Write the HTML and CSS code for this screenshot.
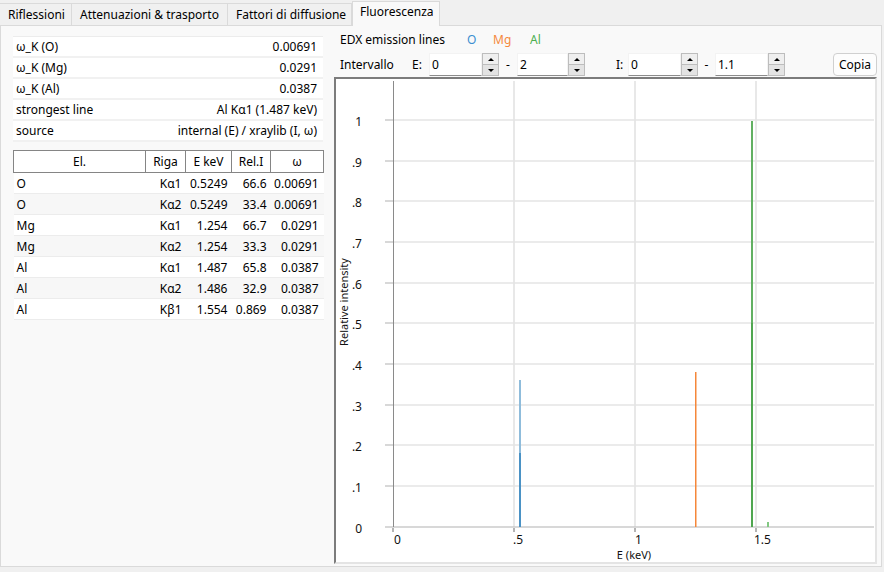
FILE: index.html
```html
<!DOCTYPE html>
<html lang="it">
<head>
	<meta charset="UTF-8">
	<title>Fluorescenza</title>
	<link rel="stylesheet" href="styles.css">
</head>
<body>
	<div class="tabs">
		<div class="tab t1">Riflessioni</div>
		<div class="tab t2">Attenuazioni &amp; trasporto</div>
		<div class="tab t3">Fattori di diffusione</div>
		<div class="tab active">Fluorescenza</div>
	</div>
	<div class="pane">
		<div class="left">
			<div class="props">
				<div class="prop"><span>ω_K (O)</span><span>0.00691</span></div>
				<div class="prop"><span>ω_K (Mg)</span><span>0.0291</span></div>
				<div class="prop"><span>ω_K (Al)</span><span>0.0387</span></div>
				<div class="prop"><span>strongest line</span><span>Al Kα1 (1.487 keV)</span></div>
				<div class="prop"><span>source</span><span>internal (E) / xraylib (I, ω)</span></div>
			</div>
			<table class="lines">
				<thead>
					<tr><th class="c-el">El.</th><th class="c-riga">Riga</th><th class="c-e">E keV</th><th class="c-rel">Rel.I</th><th class="c-w">ω</th></tr>
				</thead>
				<tbody>
					<tr><td>O</td><td>Kα1</td><td>0.5249</td><td>66.6</td><td>0.00691</td></tr>
					<tr><td>O</td><td>Kα2</td><td>0.5249</td><td>33.4</td><td>0.00691</td></tr>
					<tr><td>Mg</td><td>Kα1</td><td>1.254</td><td>66.7</td><td>0.0291</td></tr>
					<tr><td>Mg</td><td>Kα2</td><td>1.254</td><td>33.3</td><td>0.0291</td></tr>
					<tr><td>Al</td><td>Kα1</td><td>1.487</td><td>65.8</td><td>0.0387</td></tr>
					<tr><td>Al</td><td>Kα2</td><td>1.486</td><td>32.9</td><td>0.0387</td></tr>
					<tr><td>Al</td><td>Kβ1</td><td>1.554</td><td>0.869</td><td>0.0387</td></tr>
				</tbody>
			</table>
		</div>
		<div class="right">
			<div class="legend">
				<span class="ttl">EDX emission lines</span>
				<span class="el-o">O</span>
				<span class="el-mg">Mg</span>
				<span class="el-al">Al</span>
			</div>
			<div class="controls">
				<span class="lbl-int">Intervallo</span>
				<span class="lbl-e">E:</span>
				<div class="spin s-e1"><div class="val">0</div><div class="btns"><div class="up"></div><div class="dn"></div></div></div>
				<span class="dash">-</span>
				<div class="spin s-e2"><div class="val">2</div><div class="btns"><div class="up"></div><div class="dn"></div></div></div>
				<span class="lbl-i">I:</span>
				<div class="spin s-i1"><div class="val">0</div><div class="btns"><div class="up"></div><div class="dn"></div></div></div>
				<span class="dash d2">-</span>
				<div class="spin s-i2"><div class="val">1.1</div><div class="btns"><div class="up"></div><div class="dn"></div></div></div>
				<button class="copy">Copia</button>
			</div>
			<div class="chart">
				<svg width="539" height="483" viewBox="0 0 539 483">
					<!-- vertical grid -->
					<g stroke="#e8e8e8" stroke-width="2">
						<line x1="178" y1="2" x2="178" y2="448"/>
						<line x1="299" y1="2" x2="299" y2="448"/>
						<line x1="420" y1="2" x2="420" y2="448"/>
					</g>
					<!-- horizontal grid -->
					<g stroke="#e4e4e4" stroke-width="1.5">
						<line x1="57" y1="41" x2="538" y2="41"/>
						<line x1="57" y1="82" x2="538" y2="82"/>
						<line x1="57" y1="122" x2="538" y2="122"/>
						<line x1="57" y1="163" x2="538" y2="163"/>
						<line x1="57" y1="204" x2="538" y2="204"/>
						<line x1="57" y1="244" x2="538" y2="244"/>
						<line x1="57" y1="285" x2="538" y2="285"/>
						<line x1="57" y1="326" x2="538" y2="326"/>
						<line x1="57" y1="366" x2="538" y2="366"/>
						<line x1="57" y1="407" x2="538" y2="407"/>
					</g>
					<g stroke="#cbcbcb" stroke-width="1.5">
						<line x1="49" y1="41" x2="57" y2="41"/>
						<line x1="49" y1="82" x2="57" y2="82"/>
						<line x1="49" y1="122" x2="57" y2="122"/>
						<line x1="49" y1="163" x2="57" y2="163"/>
						<line x1="49" y1="204" x2="57" y2="204"/>
						<line x1="49" y1="244" x2="57" y2="244"/>
						<line x1="49" y1="285" x2="57" y2="285"/>
						<line x1="49" y1="326" x2="57" y2="326"/>
						<line x1="49" y1="366" x2="57" y2="366"/>
						<line x1="49" y1="407" x2="57" y2="407"/>
						<line x1="49" y1="448" x2="538" y2="448"/>
					</g>
					<line x1="57.5" y1="2" x2="57.5" y2="448" stroke="#8a8a8a" stroke-width="1"/>
					<g fill="#b4b4b4">
						<rect x="56" y="449" width="2" height="4"/>
						<rect x="177" y="449" width="2" height="4"/>
						<rect x="298" y="449" width="2" height="4"/>
						<rect x="419" y="449" width="2" height="4"/>
					</g>
					<!-- emission lines -->
					<line x1="184" y1="301" x2="184" y2="448" stroke="#8fbcdb" stroke-width="2"/>
					<line x1="184" y1="374" x2="184" y2="448" stroke="#4a92c5" stroke-width="2"/>
					<rect x="359" y="293" width="1.5" height="155" fill="#f5873a"/>
					<line x1="416" y1="42" x2="416" y2="448" stroke="#62b062" stroke-width="2"/>
					<line x1="416" y1="244" x2="416" y2="448" stroke="#50a650" stroke-width="2"/>
					<line x1="432" y1="443" x2="432" y2="448" stroke="#82c882" stroke-width="2"/>
					<!-- labels -->
					<g class="tick" text-anchor="end">
						<text x="26" y="47">1</text>
						<text x="26" y="88">.9</text>
						<text x="26" y="128">.8</text>
						<text x="26" y="169">.7</text>
						<text x="26" y="210">.6</text>
						<text x="26" y="250">.5</text>
						<text x="26" y="291">.4</text>
						<text x="26" y="332">.3</text>
						<text x="26" y="372">.2</text>
						<text x="26" y="413">.1</text>
						<text x="26" y="454">0</text>
					</g>
					<g class="tick">
						<text x="58" y="465">0</text>
						<text x="177" y="465">.5</text>
						<text x="299" y="465">1</text>
						<text x="418" y="465">1.5</text>
					</g>
					<text class="axis" x="298" y="480" text-anchor="middle">E (keV)</text>
					<text class="axis" transform="translate(12,223) rotate(-90)" text-anchor="middle">Relative intensity</text>
				</svg>
			</div>
		</div>
	</div>
</body>
</html>
```
FILE: styles.css
```css
* {
	box-sizing: border-box;
}
html, body {
	margin: 0;
	padding: 0;
}
body {
	width: 884px;
	height: 572px;
	overflow: hidden;
	background: #f0f0f0;
	font-family: "Noto Sans", "Segoe UI", sans-serif;
	font-size: 12px;
	color: #000;
}

/* tab bar */
.tabs {
	display: flex;
	align-items: flex-end;
	height: 25px;
	position: relative;
	z-index: 1;
}
.tab {
	height: 22px;
	padding: 2px 0 0 8px;
	border-top: 1px solid #dadada;
	border-right: 1px solid #dadada;
	background: #f0f0f0;
	white-space: nowrap;
	overflow: hidden;
}
.t1 { width: 72px; }
.t2 { width: 156px; }
.t3 { width: 124px; }
.tab.active {
	width: 88px;
	height: 25px;
	margin-bottom: -1px;
	padding: 1px 0 0 7px;
	background: #f9f9f9;
	border: 1px solid #dadada;
	border-bottom: none;
}

.pane {
	display: flex;
	width: 882px;
	height: 542px;
	border: 1px solid #dadada;
	background: #f9f9f9;
}

/* left side */
.left {
	width: 333px;
	padding: 10px 10px 0 12px;
}
.props {
	width: 310px;
	border-top: 1px solid #ececec;
}
.prop {
	display: flex;
	justify-content: space-between;
	align-items: center;
	height: 21px;
	padding: 0 6px 0 3px;
	background: #fff;
	border-bottom: 2px solid #f1f1f1;
}
.lines {
	margin-top: 8px;
	width: 310px;
	border-collapse: collapse;
	table-layout: fixed;
}
.lines th {
	height: 22px;
	padding: 0;
	font-weight: normal;
	background: #fff;
	border: 1px solid #858585;
	white-space: nowrap;
	overflow: hidden;
}
.c-el { width: 132px; }
.c-riga { width: 40px; }
.c-e { width: 46px; }
.c-rel { width: 39px; }
.c-w { width: 53px; }
.lines td {
	height: 21px;
	padding: 0 4px 0 0;
	text-align: right;
	white-space: nowrap;
	background: #fff;
	border-bottom: 1px solid #ececec;
}
.lines td:first-child {
	text-align: left;
	padding-left: 3px;
}
.lines td:last-child {
	padding-right: 5px;
}
.lines tbody tr:nth-child(even) td {
	background: #f7f7f7;
}

/* right side */
.right {
	flex: 1;
	display: flex;
	flex-direction: column;
	padding: 0 4px 2px 0;
}
.legend {
	display: flex;
	align-items: center;
	height: 26px;
	padding-left: 6px;
	white-space: nowrap;
}
.legend .ttl { width: 127px; }
.el-o { width: 26px; color: #3d8fd1; }
.el-mg { width: 37px; color: #f5893e; }
.el-al { color: #4caf50; }

.controls {
	display: flex;
	align-items: center;
	height: 25px;
	padding-left: 6px;
	white-space: nowrap;
}
.lbl-int { width: 72px; }
.lbl-e { width: 17px; }
.lbl-i { width: 12px; margin-left: 31px; }
.dash {
	width: 18px;
	text-align: center;
}
.d2 { width: 17px; }
.spin {
	display: flex;
	height: 23px;
}
.s-e1 { width: 70px; }
.s-e2 { width: 68px; }
.s-i1, .s-i2 { width: 70px; }
.spin .val {
	flex: 1;
	background: #fff;
	border: 1px solid #f3f3f3;
	border-bottom-color: #8c8c8c;
	padding-left: 2px;
	line-height: 21px;
}
.spin .btns {
	width: 17px;
	display: flex;
	flex-direction: column;
}
.spin .up, .spin .dn {
	flex: 1;
	display: flex;
	align-items: center;
	justify-content: center;
	border: 1px solid #bdbdbd;
	background: #efefef;
}
.spin .dn {
	border-top: none;
	background: #e3e3e3;
}
.spin .up::after, .spin .dn::after {
	content: "";
	border-left: 3px solid transparent;
	border-right: 3px solid transparent;
}
.spin .up::after {
	border-bottom: 3px solid #000;
}
.spin .dn::after {
	border-top: 3px solid #000;
}
.copy {
	margin-left: auto;
	width: 44px;
	height: 23px;
	padding: 0;
	font-family: inherit;
	font-size: 12px;
	color: #000;
	background: #fdfdfd;
	border: 1px solid #d0d0d0;
	border-radius: 4px;
}

.chart {
	flex: 1;
	background: #fff;
	border-top: 2px solid #7c7c7c;
	border-left: 2px solid #7c7c7c;
	border-right: 2px solid #e4e4e4;
	border-bottom: 2px solid #e4e4e4;
}
.chart svg {
	display: block;
}
.tick {
	font-family: "Noto Sans", sans-serif;
	font-size: 12px;
	fill: #111;
}
.axis {
	font-family: "Noto Sans", sans-serif;
	font-size: 11px;
	fill: #111;
}
```
